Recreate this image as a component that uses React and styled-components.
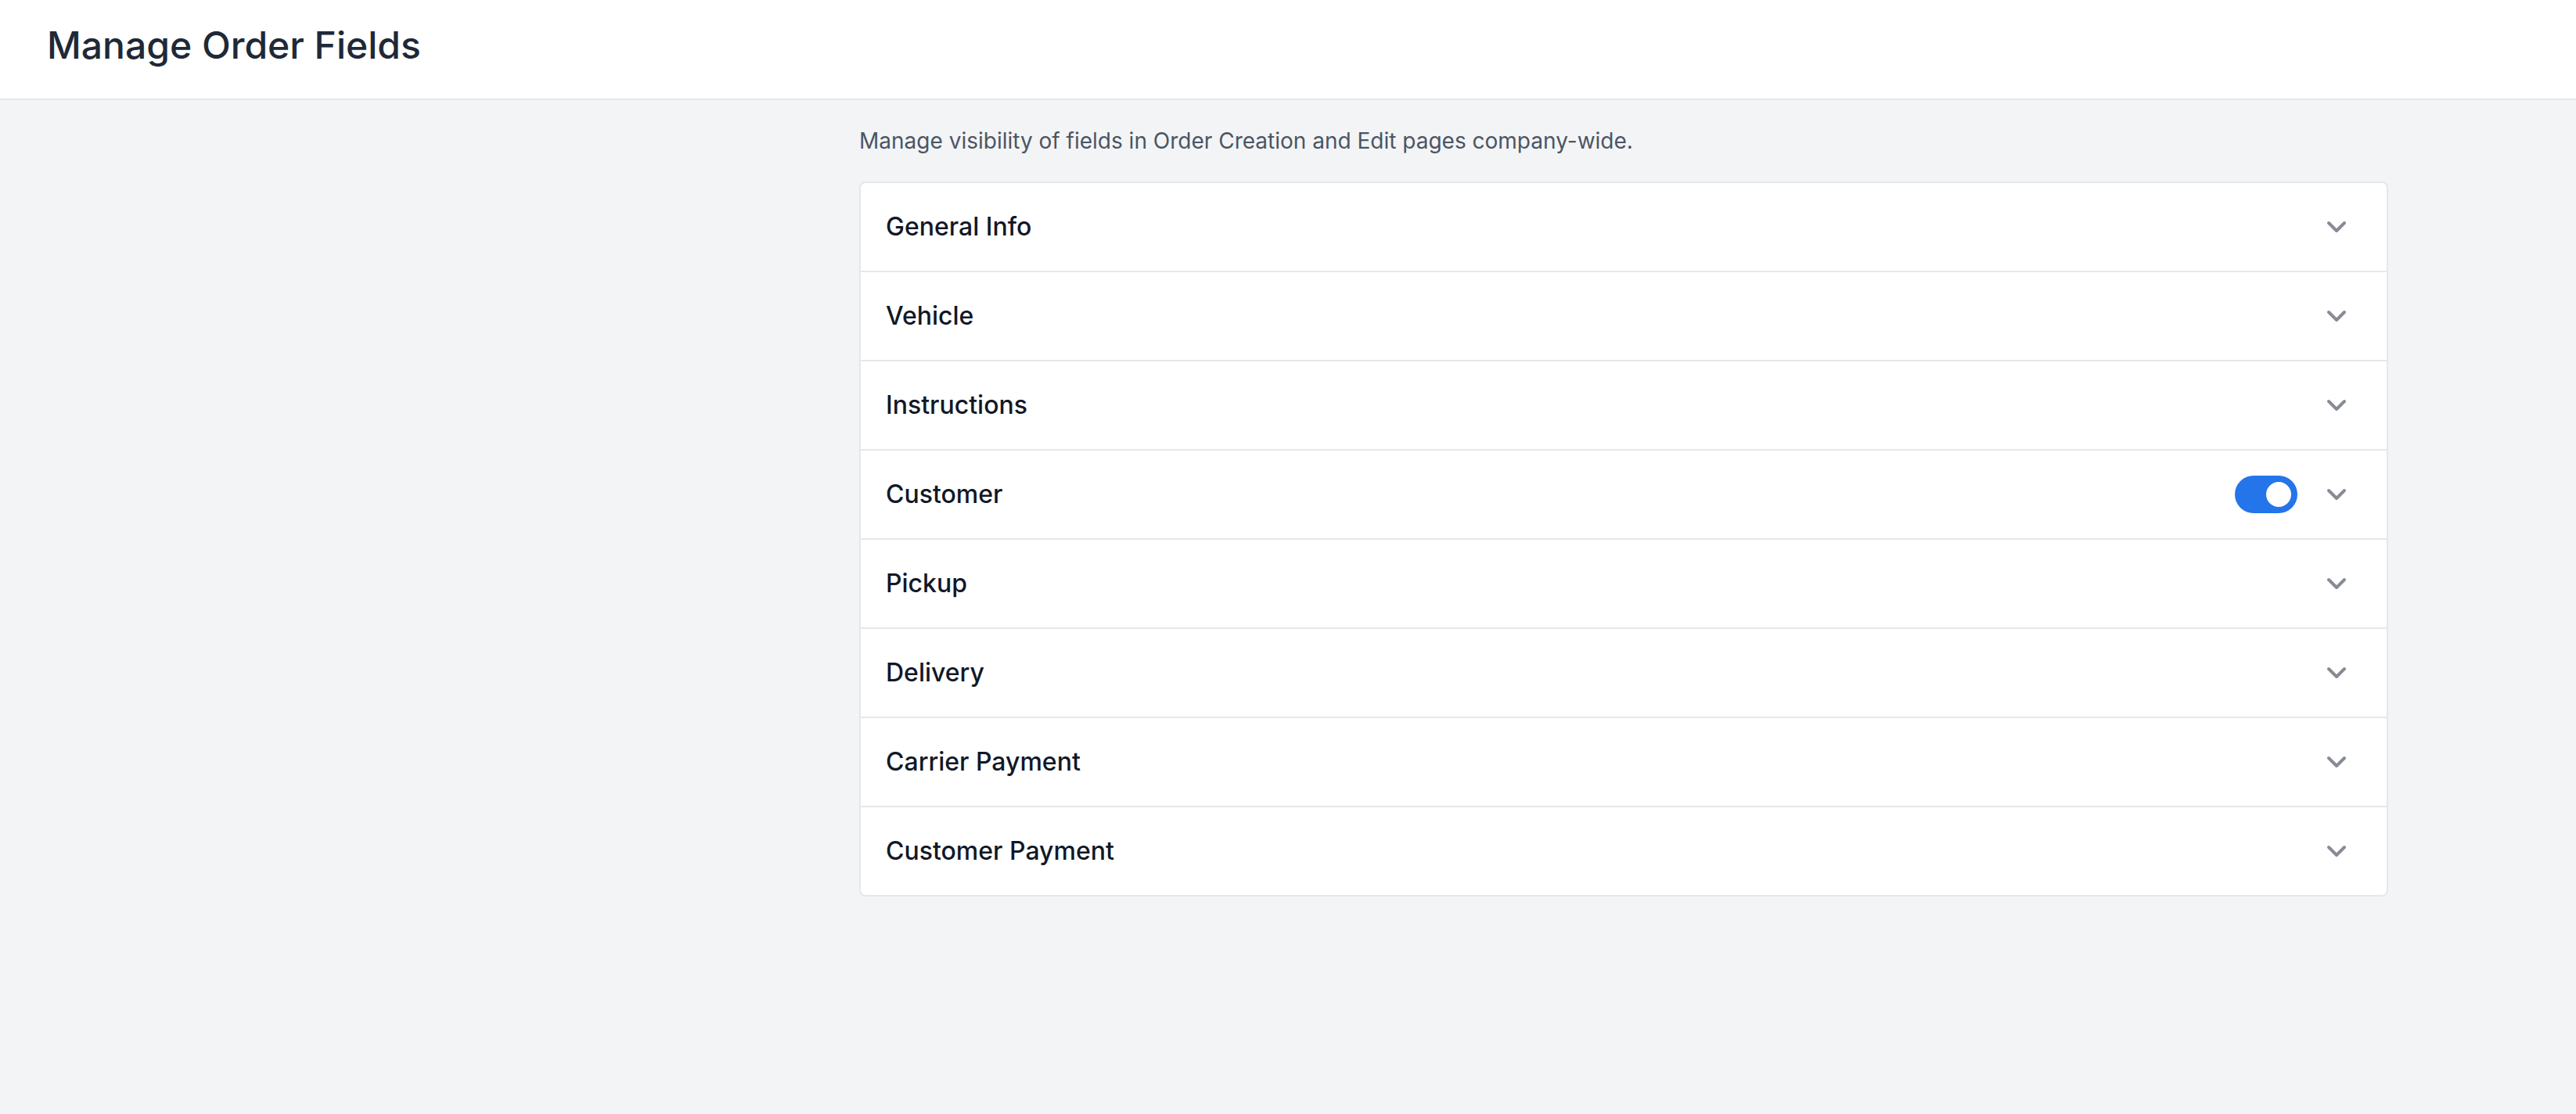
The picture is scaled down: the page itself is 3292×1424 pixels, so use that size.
import React, { useState } from "react";
import styled, { createGlobalStyle } from "styled-components";

const GlobalStyle = createGlobalStyle`
  * { box-sizing: border-box; }
  html, body {
    margin: 0;
    padding: 0;
    background: #f3f4f6;
    font-family: Inter, "Noto Sans", "Liberation Sans", sans-serif;
  }
`;

const Page = styled.div`
  min-height: 1424px;
  background: #f3f4f6;
`;

const Header = styled.header`
  height: 128px;
  padding: 26px 60px 0;
  background: #ffffff;
  border-bottom: 2px solid #e5e7eb;
`;

const Title = styled.h1`
  margin: 0;
  font-size: 48px;
  line-height: 64px;
  font-weight: 500;
  color: #1f2937;
  letter-spacing: 0;
`;

const Main = styled.main`
  display: grid;
  grid-template-columns: 1098px 1954px;
  padding-top: 32px;
`;

const Content = styled.section`
  grid-column: 2;
  display: flex;
  flex-direction: column;
  gap: 32px;
`;

const Subtitle = styled.p`
  margin: 0;
  font-size: 28px;
  line-height: 40px;
  color: #4b5563;
`;

const Card = styled.div`
  background: #ffffff;
  border: 2px solid #e5e7eb;
  border-radius: 8px;
  overflow: hidden;
`;

const Row = styled.div`
  display: flex;
  align-items: center;
  justify-content: space-between;
  padding: 32px 44px 32px 32px;
  border-top: ${(p) => (p.$first ? "none" : "2px solid #e5e7eb")};
`;

const Label = styled.span`
  font-size: 32px;
  line-height: 48px;
  font-weight: 500;
  color: #111827;
`;

const Actions = styled.div`
  display: flex;
  align-items: center;
  gap: 30px;
`;

const Toggle = styled.button`
  width: 80px;
  height: 48px;
  padding: 0 8px;
  border: none;
  border-radius: 24px;
  background: ${(p) => (p.$on ? "#2474ea" : "#e5e7eb")};
  display: flex;
  align-items: center;
  justify-content: ${(p) => (p.$on ? "flex-end" : "flex-start")};
  cursor: pointer;
`;

const Knob = styled.span`
  width: 32px;
  height: 32px;
  border-radius: 50%;
  background: #ffffff;
`;

const Chevron = styled.svg`
  width: 40px;
  height: 40px;
  display: block;
  color: #868b94;
`;

const ChevronDown = () => (
  <Chevron viewBox="0 0 24 24" fill="none" stroke="currentColor" strokeWidth="2.4" strokeLinecap="round" strokeLinejoin="round">
    <path d="m6 9 6 6 6-6" />
  </Chevron>
);

const sections = [
  { name: "General Info" },
  { name: "Vehicle" },
  { name: "Instructions" },
  { name: "Customer", toggle: true },
  { name: "Pickup" },
  { name: "Delivery" },
  { name: "Carrier Payment" },
  { name: "Customer Payment" },
];

export default function App() {
  const [on, setOn] = useState(true);
  return (
    <Page>
      <GlobalStyle />
      <Header>
        <Title>Manage Order Fields</Title>
      </Header>
      <Main>
        <Content>
          <Subtitle>Manage visibility of fields in Order Creation and Edit pages company-wide.</Subtitle>
          <Card>
            {sections.map((s, i) => (
              <Row key={s.name} $first={i === 0}>
                <Label>{s.name}</Label>
                <Actions>
                  {s.toggle && (
                    <Toggle $on={on} onClick={() => setOn(!on)} aria-label="toggle">
                      <Knob />
                    </Toggle>
                  )}
                  <ChevronDown />
                </Actions>
              </Row>
            ))}
          </Card>
        </Content>
      </Main>
    </Page>
  );
}
